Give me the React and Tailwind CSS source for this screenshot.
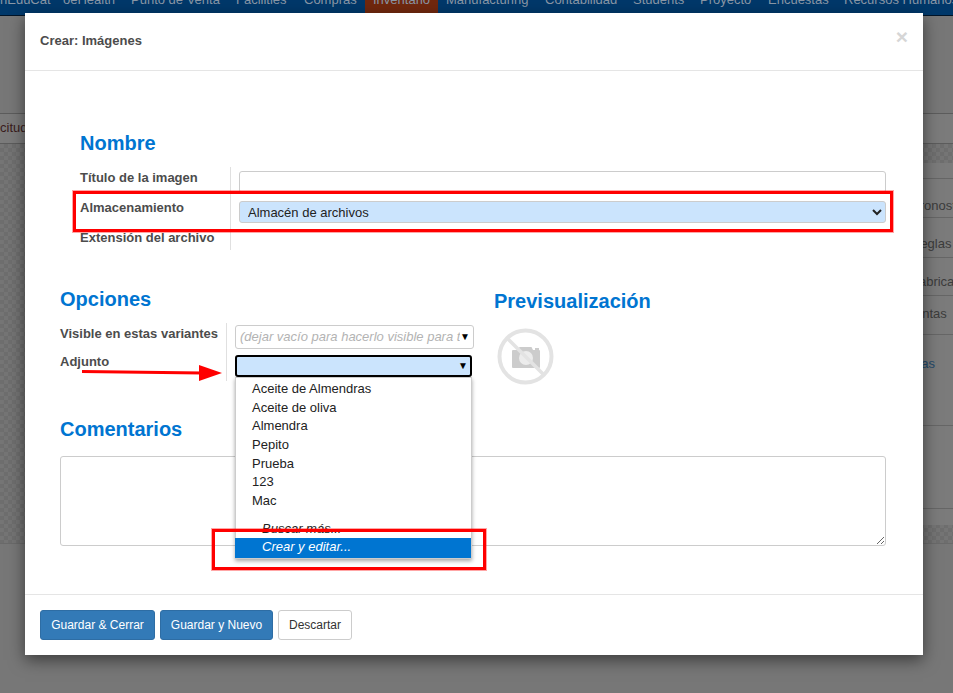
import React from "react";

const options = ["Aceite de Almendras", "Aceite de oliva", "Almendra", "Pepito", "Prueba", "123", "Mac"];

function Background() {
  return (
    <div className="flex flex-col text-[13px] leading-[18px] text-[#3c3c3c]">
      <div className="flex h-[16px] items-start overflow-hidden border-b border-[#001428] bg-[#00386a] text-[#8a97a6]">
        <div className="-mt-[12px] flex h-[40px] whitespace-nowrap">
          <span className="w-[63px] pt-[3px]">nEduCat</span>
          <span className="w-[68px] pt-[3px]">oeHealth</span>
          <span className="w-[105px] pt-[3px]">Punto de Venta</span>
          <span className="w-[68px] pt-[3px]">Facilities</span>
          <span className="w-[61px] pt-[3px]">Compras</span>
          <span className="h-[40px] w-[73px] bg-[#71280e] px-[8px] pt-[3px]">Inventario</span>
          <span className="w-[107px] pl-[8px] pt-[3px]">Manufacturing</span>
          <span className="w-[88px] pt-[3px]">Contabilidad</span>
          <span className="w-[67px] pt-[3px]">Students</span>
          <span className="w-[68px] pt-[3px]">Proyecto</span>
          <span className="w-[76px] pt-[3px]">Encuestas</span>
          <span className="pt-[3px]">Recursos Humanos</span>
        </div>
      </div>
      <div className="h-[98px] border-b border-[#5c5c5c] bg-[#777777]" />
      <div className="h-[30px] border-b border-[#5c5c5c] bg-[#7b7b7b] pt-[5px]">
        <span className="text-[#3a1c1c]">citud</span>
      </div>
      <div className="flex h-[399px] justify-end bg-[repeating-conic-gradient(#6e6e6e_0%_25%,#757575_0%_50%)] bg-[length:8px_8px] pb-[18px] pt-[19px]">
        <div className="w-[873px] bg-[#7b7b7b]">
          <div className="h-[16px] border-b border-[#666666]" />
          <div className="h-[39px] whitespace-nowrap border-b border-[#666666] pl-[831px] pt-[18px]">Pronostico</div>
          <div className="h-[40px] whitespace-nowrap border-b border-[#666666] pl-[831px] pt-[17px]">Reglas</div>
          <div className="h-[38px] whitespace-nowrap border-b border-[#666666] pl-[831px] pt-[15px]">Fabricación</div>
          <div className="h-[39px] whitespace-nowrap border-b border-[#666666] pl-[827px] pt-[9px]">Ventas</div>
          <div className="h-[91px] whitespace-nowrap border-b border-[#666666] pl-[816px] pt-[20px] text-[#244a6a]">Tareas</div>
          <div className="h-[83px] border-b border-[#666666]" />
        </div>
      </div>
      <div className="h-[150px] border-t border-[#6a6a6a] bg-[#777777]" />
    </div>
  );
}

function NoImageIcon() {
  return (
    <svg width="60" height="60" viewBox="0 0 60 60" className="block">
      <circle cx="29.5" cy="29.5" r="26" fill="none" stroke="#e3e3e3" strokeWidth="4" />
      <path fill="#cccccc" d="M16 24 a1 1 0 0 1 1-1 h5 l1.5-3 h12 l1.5 3 h2 v-2 h4 v2 a1 1 0 0 1 1 1 v16 a1 1 0 0 1-1 1 h-26 a1 1 0 0 1-1-1 z" />
      <circle cx="30" cy="31" r="7" fill="#ececec" />
      <line x1="12" y1="12" x2="47" y2="47" stroke="#e3e3e3" strokeWidth="3.5" />
    </svg>
  );
}

function Modal() {
  const h = "text-[20px] leading-[22px] font-bold text-[#0075d1]";
  const label = "text-[13px] leading-[18px] font-bold text-[#4c4c4c]";
  return (
    <div className="absolute left-[25px] top-[13px] flex h-[642px] w-[898px] flex-col bg-white shadow-[0_5px_15px_rgba(0,0,0,0.5)]">
      <div className="relative flex h-[58px] shrink-0 items-center border-b border-[#e5e5e5] pb-[2px] pl-[15px]">
        <span className="text-[13px] font-bold text-[#4c4c4c]">Crear: Imágenes</span>
        <span className="absolute right-[15px] top-[13px] text-[21px] font-bold leading-[21px] text-[#d6d6d6]">×</span>
      </div>

      <div className="flex-1 pl-[35px] pr-[37px] pt-[61px]">
        <div className="pl-[20px]">
          <div className={`${h} mb-[13px]`}>Nombre</div>
          <div className="grid grid-cols-[151px_1fr] grid-rows-[30px_30px_23px]">
            <div className={`${label} border-r border-[#e0e0e0] pt-[2px]`}>Título de la imagen</div>
            <div className="pl-[8px] pt-[4px]">
              <input className="block h-[22px] w-full rounded-[3px] border border-[#cccccc] bg-white outline-none" />
            </div>
            <div className={`${label} border-r border-[#e0e0e0] pt-[2px]`}>Almacenamiento</div>
            <div className="pl-[8px] pt-[4px]">
              <select className="block h-[22px] w-full rounded-[3px] border border-[#cccccc] bg-[#cbe4fd] pl-[4px] text-[13px] text-[#222222]">
                <option>Almacén de archivos</option>
              </select>
            </div>
            <div className={`${label} border-r border-[#e0e0e0] pt-[2px]`}>Extensión del archivo</div>
            <div />
          </div>
        </div>

        <div className="mt-[38px] flex">
          <div className="w-[434px]">
            <div className={`${h} mb-[13px]`}>Opciones</div>
            <div className="grid grid-cols-[167px_1fr] grid-rows-[29px_29px]">
              <div className={`${label} border-r border-[#e0e0e0] pt-[2px]`}>Visible en estas variantes</div>
              <div className="pl-[8px] pt-[2px]">
                <div className="flex h-[24px] w-[239px] items-center overflow-hidden whitespace-nowrap rounded-[3px] border border-[#cccccc] pl-[4px] text-[13px] italic text-[#b3b3b3]">
                  <span className="w-[220px] shrink-0 overflow-hidden">(dejar vacío para hacerlo visible para todas)</span>
                  <span className="text-[10px] not-italic leading-none text-black">▼</span>
                </div>
              </div>
              <div className={`${label} border-r border-[#e0e0e0] pt-[1px]`}>Adjunto</div>
              <div className="relative pl-[8px] pt-[3px]">
                <div className="flex h-[22px] w-[237px] items-center justify-end rounded-[3px] border-2 border-black bg-[#cbe4fd] pr-[2px] text-[10px] leading-none text-black">▼</div>
                <div className="absolute left-[8px] top-[25px] z-10 h-[182px] w-[237px] border border-[#cccccc] bg-white pt-[2.3px] text-[13px] leading-[18.57px] text-[#222222] shadow-[0_2px_4px_rgba(0,0,0,0.35)]">
                  {options.map((o) => (
                    <div key={o} className="pl-[16px]">{o}</div>
                  ))}
                  <div className="mt-[9.3px] pl-[26px] italic">Buscar más...</div>
                  <div className="-ml-[1px] h-[20px] bg-[#0075d1] pl-[27px] italic text-white">Crear y editar...</div>
                </div>
              </div>
            </div>
          </div>
          <div className="pt-[2px]">
            <div className={h}>Previsualización</div>
            <div className="ml-[2px] mt-[15px]"><NoImageIcon /></div>
          </div>
        </div>

        <div className={`${h} mb-[16px] mt-[31px]`}>Comentarios</div>
        <textarea className="block h-[90px] w-[826px] rounded-[3px] border border-[#cccccc] bg-white outline-none" />
      </div>

      <div className="flex h-[61px] shrink-0 gap-[5px] border-t border-[#e5e5e5] pl-[15px] pt-[15px] text-[12px]">
        <button className="h-[30px] w-[115px] rounded-[3px] border border-[#2e6da4] bg-[#337ab7] text-white">Guardar &amp; Cerrar</button>
        <button className="h-[30px] w-[113px] rounded-[3px] border border-[#2e6da4] bg-[#337ab7] text-white">Guardar y Nuevo</button>
        <button className="h-[30px] w-[74px] rounded-[3px] border border-[#cccccc] bg-white text-[#333333]">Descartar</button>
      </div>
    </div>
  );
}

export default function App() {
  return (
    <div className="relative h-[693px] w-[953px] overflow-hidden bg-[#777777] font-['Liberation_Sans',Arial,sans-serif]">
      <Background />
      <Modal />
      <div className="pointer-events-none absolute left-[73px] top-[191px] z-20 h-[41px] w-[820px] border-[3px] border-[#ff0000] shadow-[0_0_0_1px_rgba(255,0,0,0.35)]" />
      <div className="pointer-events-none absolute left-[212px] top-[529px] z-20 h-[41px] w-[274px] border-[3px] border-[#ff0000] shadow-[0_0_0_1px_rgba(255,0,0,0.35)]" />
      <svg width="145" height="20" viewBox="0 0 145 20" className="pointer-events-none absolute left-[80px] top-[363px] z-20">
        <line x1="2" y1="8.5" x2="122" y2="10" stroke="#ff0000" strokeWidth="3" />
        <polygon points="119,2 142,10 119,18" fill="#ff0000" />
      </svg>
    </div>
  );
}
